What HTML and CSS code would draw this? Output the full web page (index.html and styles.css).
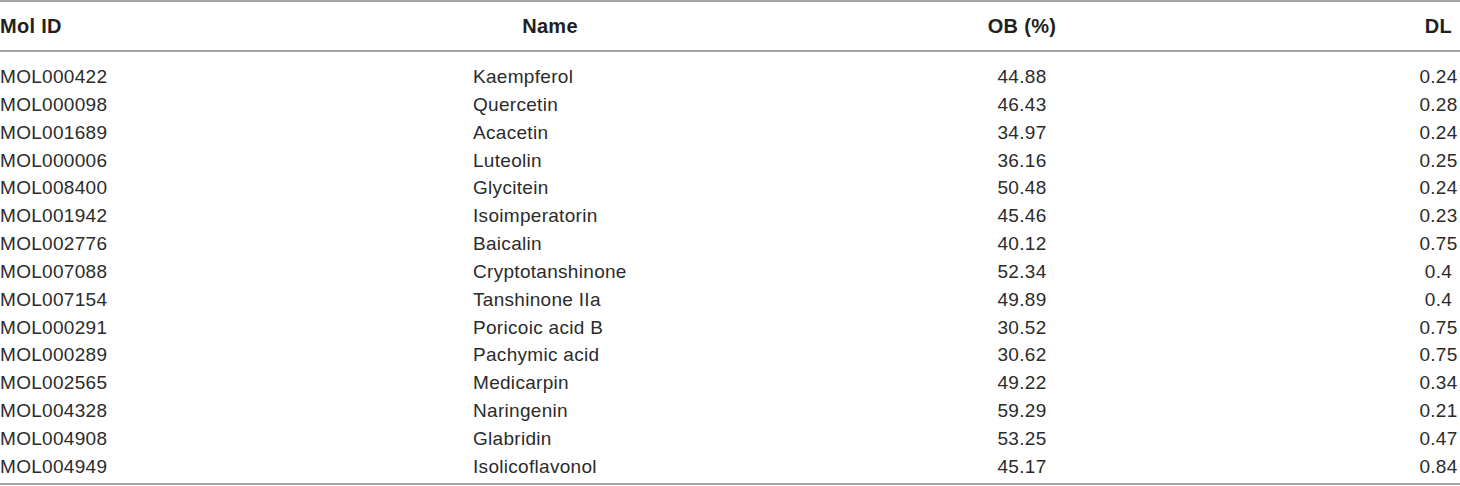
FILE: index.html
```html
<!DOCTYPE html>
<html lang="en">
<head>
<meta charset="utf-8">
<title>Compounds</title>
<link rel="stylesheet" href="styles.css">
</head>
<body>
<table class="data">
  <colgroup>
    <col class="c-id">
    <col class="c-name">
    <col class="c-ob">
    <col class="c-dl">
  </colgroup>
  <thead>
    <tr>
      <th class="left">Mol ID</th>
      <th>Name</th>
      <th>OB (%)</th>
      <th>DL</th>
    </tr>
  </thead>
  <tbody>
    <tr><td>MOL000422</td><td class="nm">Kaempferol</td><td>44.88</td><td>0.24</td></tr>
    <tr><td>MOL000098</td><td class="nm">Quercetin</td><td>46.43</td><td>0.28</td></tr>
    <tr><td>MOL001689</td><td class="nm">Acacetin</td><td>34.97</td><td>0.24</td></tr>
    <tr><td>MOL000006</td><td class="nm">Luteolin</td><td>36.16</td><td>0.25</td></tr>
    <tr><td>MOL008400</td><td class="nm">Glycitein</td><td>50.48</td><td>0.24</td></tr>
    <tr><td>MOL001942</td><td class="nm">Isoimperatorin</td><td>45.46</td><td>0.23</td></tr>
    <tr><td>MOL002776</td><td class="nm">Baicalin</td><td>40.12</td><td>0.75</td></tr>
    <tr><td>MOL007088</td><td class="nm">Cryptotanshinone</td><td>52.34</td><td>0.4</td></tr>
    <tr><td>MOL007154</td><td class="nm">Tanshinone IIa</td><td>49.89</td><td>0.4</td></tr>
    <tr><td>MOL000291</td><td class="nm">Poricoic acid B</td><td>30.52</td><td>0.75</td></tr>
    <tr><td>MOL000289</td><td class="nm">Pachymic acid</td><td>30.62</td><td>0.75</td></tr>
    <tr><td>MOL002565</td><td class="nm">Medicarpin</td><td>49.22</td><td>0.34</td></tr>
    <tr><td>MOL004328</td><td class="nm">Naringenin</td><td>59.29</td><td>0.21</td></tr>
    <tr><td>MOL004908</td><td class="nm">Glabridin</td><td>53.25</td><td>0.47</td></tr>
    <tr><td>MOL004949</td><td class="nm">Isolicoflavonol</td><td>45.17</td><td>0.84</td></tr>
  </tbody>
</table>
</body>
</html>
```

FILE: styles.css
```css
html, body {
  margin: 0;
  padding: 0;
  background: #ffffff;
}

.data {
  width: 1460px;
  table-layout: fixed;
  border-collapse: collapse;
  border-top: 2px solid #a3a3a3;
  border-bottom: 2px solid #a3a3a3;
  font-family: "Liberation Sans", Arial, sans-serif;
  color: #231f20;
}

.c-id { width: 473px; }
.c-name { width: 154px; }
.c-dl { width: 43px; }

.data th {
  font-size: 20px;
  font-weight: bold;
  letter-spacing: 0.3px;
  height: 48px;
  padding: 0;
  text-align: center;
  vertical-align: middle;
  white-space: nowrap;
  border-bottom: 2px solid #a3a3a3;
}

.data th.left {
  text-align: left;
}

.data td {
  font-size: 19px;
  line-height: 27.85px;
  letter-spacing: 0.3px;
  color: #2b2b2b;
  padding: 0;
  text-align: center;
  white-space: nowrap;
  overflow: visible;
}

.data td:first-child {
  text-align: left;
}

.data td.nm {
  text-align: left;
}

.data tbody tr:first-child td {
  padding-top: 11px;
}

.data tbody tr:last-child td {
  padding-bottom: 2px;
}
```
